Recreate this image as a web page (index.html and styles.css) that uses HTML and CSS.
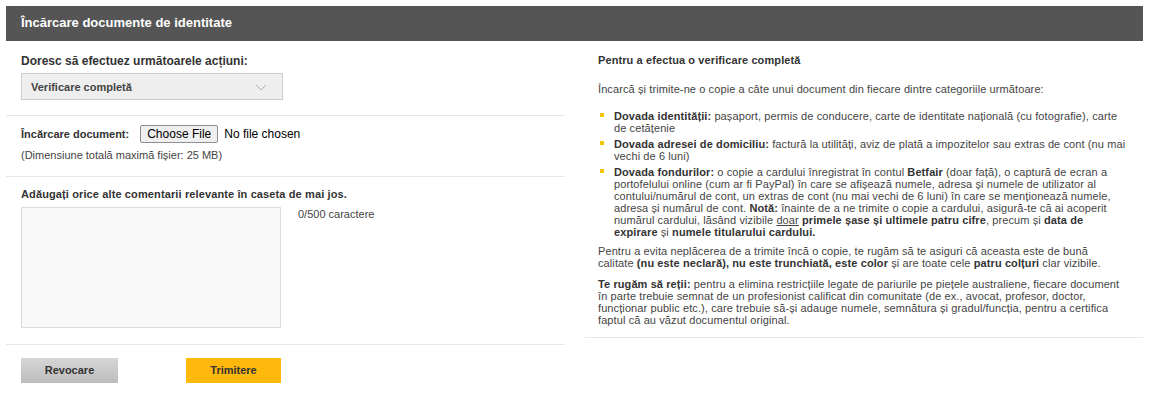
FILE: index.html
```html
<!DOCTYPE html>
<html lang="ro">
<head>
    <meta charset="UTF-8">
    <title>Încărcare documente de identitate</title>
    <link rel="stylesheet" href="styles.css">
</head>
<body>
    <div id="panel">
        <div class="title">Încărcare documente de identitate</div>
        <div class="main">
            <div class="left">
                <div class="sec sec-action">
                    <div class="label label-big">Doresc să efectuez următoarele acțiuni:</div>
                    <div class="select">
                        <span>Verificare completă</span>
                        <svg class="chev" width="12" height="7" viewBox="0 0 12 7"><path d="M1 1l5 5 5-5" fill="none" stroke="#aaa" stroke-width="1"/></svg>
                    </div>
                </div>
                <div class="sec sec-file">
                    <div class="file-row">
                        <span class="label">Încărcare document:</span>
                        <span class="file-btn">Choose File</span>
                        <span class="file-none">No file chosen</span>
                    </div>
                    <div class="hint">(Dimensiune totală maximă fișier: 25 MB)</div>
                </div>
                <div class="sec sec-comment">
                    <div class="label label-wide">Adăugați orice alte comentarii relevante în caseta de mai jos.</div>
                    <div class="comment-row">
                        <div class="textarea"></div>
                        <div class="count">0/500 caractere</div>
                    </div>
                </div>
                <div class="sec-btns">
                    <a class="btn btn-cancel" href="javascript:;">Revocare</a>
                    <a class="btn btn-send" href="javascript:;">Trimitere</a>
                </div>
            </div>
            <div class="right">
                <div class="r-title">Pentru a efectua o verificare completă</div>
                <p>Încarcă și trimite-ne o copie a câte unui document din fiecare dintre categoriile următoare:</p>
                <ul class="docs">
                    <li><b>Dovada identității:</b> pașaport, permis de conducere, carte de identitate națională (cu fotografie), carte<br>de cetățenie</li>
                    <li><b>Dovada adresei de domiciliu:</b> factură la utilități, aviz de plată a impozitelor sau extras de cont (nu mai<br>vechi de 6 luni)</li>
                    <li><b>Dovada fondurilor:</b> o copie a cardului înregistrat în contul <b>Betfair</b> (doar față), o captură de ecran a<br>portofelului online (cum ar fi PayPal) în care se afișează numele, adresa și numele de utilizator al<br>contului/numărul de cont, un extras de cont (nu mai vechi de 6 luni) în care se menționează numele,<br>adresa și numărul de cont. <b>Notă:</b> înainte de a ne trimite o copie a cardului, asigură-te că ai acoperit<br>numărul cardului, lăsând vizibile <u>doar</u> <b>primele șase și ultimele patru cifre</b>, precum și <b>data de<br>expirare</b> și <b>numele titularului cardului.</b></li>
                </ul>
                <p class="p-quality">Pentru a evita neplăcerea de a trimite încă o copie, te rugăm să te asiguri că aceasta este de bună<br>calitate <b>(nu este neclară), nu este trunchiată, este color</b> și are toate cele <b>patru colțuri</b> clar vizibile.</p>
                <p class="p-note"><b>Te rugăm să reții:</b> pentru a elimina restricțiile legate de pariurile pe piețele australiene, fiecare document<br>în parte trebuie semnat de un profesionist calificat din comunitate (de ex., avocat, profesor, doctor,<br>funcționar public etc.), care trebuie să-și adauge numele, semnătura și gradul/funcția, pentru a certifica<br>faptul că au văzut documentul original.</p>
            </div>
        </div>
    </div>
</body>
</html>
```

FILE: styles.css
```css
body {
    margin: 0;
    background: #ffffff;
    font-family: "Liberation Sans", Arial, sans-serif;
    color: #333333;
}

ul, p {
    margin: 0;
    padding: 0;
}

a {
    text-decoration: none;
}

#panel {
    margin: 6px 7px 0 6px;
}

.title {
    height: 35px;
    line-height: 34px;
    padding-left: 15px;
    background: #555555;
    color: #ffffff;
    font-size: 13px;
    font-weight: bold;
}

.main {
    display: flex;
    gap: 20px;
}

.left {
    width: 559px;
}

.right {
    flex: 1;
    padding: 13px 4px 11px 13px;
    align-self: flex-start;
    border-bottom: 1px solid #e8e8e8;
    font-size: 11px;
    line-height: 12px;
    letter-spacing: 0.1px;
    white-space: nowrap;
    color: #444444;
}

.label {
    font-size: 11px;
    font-weight: bold;
    color: #333333;
}

.label-big {
    font-size: 12px;
}

.label-wide {
    letter-spacing: 0.12px;
}

.sec {
    padding-left: 15px;
    border-bottom: 1px solid #e8e8e8;
    box-sizing: border-box;
}

.sec-action {
    height: 75px;
    padding-top: 13px;
}

.select {
    display: flex;
    align-items: center;
    justify-content: space-between;
    width: 262px;
    height: 27px;
    margin-top: 5px;
    padding: 0 15px 0 9px;
    box-sizing: border-box;
    background: #eeeeee;
    border: 1px solid #cccccc;
    font-size: 11px;
    font-weight: bold;
    color: #444444;
}

.chev {
    margin-top: 2px;
}

.sec-file {
    height: 61px;
    padding-top: 9px;
}

.file-row {
    display: flex;
    align-items: center;
}

.file-btn {
    margin-left: 11px;
    padding: 1px 6px;
    background: #efefef;
    border: 1px solid #8f8f8f;
    border-radius: 2px;
    font-size: 12px;
    color: #000000;
}

.file-none {
    margin-left: 6px;
    font-size: 12px;
    color: #000000;
}

.hint {
    margin-top: 6px;
    font-size: 11px;
    color: #444444;
}

.sec-comment {
    height: 168px;
    padding-top: 11px;
}

.comment-row {
    display: flex;
    margin-top: 7px;
}

.textarea {
    width: 260px;
    height: 121px;
    box-sizing: border-box;
    background: #f8f8f8;
    border: 1px solid #dddddd;
}

.count {
    margin: 1px 0 0 17px;
    font-size: 11px;
    color: #444444;
}

.sec-btns {
    display: flex;
    gap: 68px;
    padding: 13px 0 0 15px;
}

.btn {
    display: block;
    height: 25px;
    line-height: 25px;
    text-align: center;
    font-size: 11px;
    font-weight: bold;
    color: #333333;
}

.btn-cancel {
    width: 97px;
    background: linear-gradient(#d6d6d6, #bcbcbc);
}

.btn-send {
    width: 95px;
    background: #ffb80c;
}

.r-title {
    font-weight: bold;
    color: #333333;
}

.right p {
    margin-top: 17px;
}

.right .p-quality {
    margin-top: 7px;
}

.right .p-note {
    margin-top: 9px;
}

.docs {
    list-style: none;
    margin-top: 15px;
    padding-left: 16px;
}

.docs li {
    position: relative;
}

.docs li + li {
    margin-top: 4px;
}

.docs li:before {
    content: "";
    position: absolute;
    left: -14px;
    top: 3px;
    width: 4px;
    height: 4px;
    background: #f5c400;
}

.right b {
    color: #333333;
}
```
